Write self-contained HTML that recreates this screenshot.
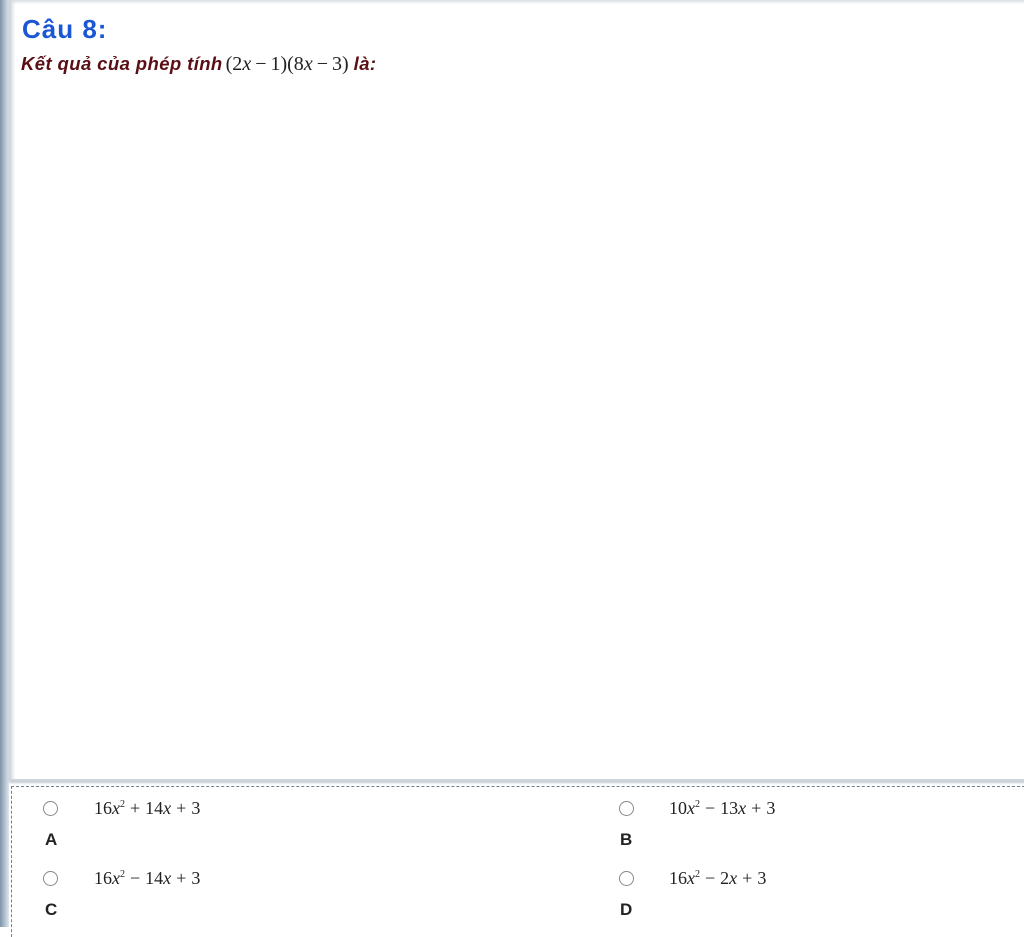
<!DOCTYPE html>
<html><head><meta charset="utf-8"><style>
body{margin:0;width:1024px;height:927px;background:#fff;position:relative;overflow:hidden;font-family:"Liberation Sans",sans-serif}
.strip{position:absolute;left:0;top:0;width:9px;height:927px;background:linear-gradient(90deg,#7f93a8,#b8c6d4 60%,#dfe5ea)}
.panel{position:absolute;left:9px;top:-2px;width:1020px;height:779px;border:2px solid #cfd6dd;box-shadow:inset 2px 2px 3px #d8dde2, 0 2px 2px #c4ccd3;background:#fff}
.h{position:absolute;left:22px;top:14px;color:#1a56d6;font-weight:bold;font-size:26px;letter-spacing:1px}
.q{position:absolute;left:21px;top:53px;color:#5a0f14;font-weight:bold;font-style:italic;font-size:18.5px;letter-spacing:0.4px}
.m{font-family:"Liberation Serif",serif;font-style:normal;font-weight:normal;color:#222;font-size:20px;letter-spacing:0;margin:0 5px 0 3px}
.m i{font-style:italic}
.o{margin:0 4px}
.dash{position:absolute;left:11px;top:786px;width:1013px;height:150px;border-top:1.5px dashed #6f7f8f;border-left:1.5px dashed #6f7f8f}
.r{position:absolute;width:13px;height:13px;border:1.5px solid #888;border-radius:50%;background:#fff}
.e{position:absolute;font-family:"Liberation Serif",serif;font-size:18px;color:#222}
.e sup{font-size:10px;vertical-align:7px}
.e .o{margin:0 5px}
.l{position:absolute;font-weight:bold;font-size:17px;color:#222}
</style></head><body>
<div class="strip"></div>
<div class="panel"></div>
<div class="h">Câu 8:</div>
<div class="q">Kết quả của phép tính<span class="m">(2<i>x</i><span class="o">−</span>1)(8<i>x</i><span class="o">−</span>3)</span>là:</div>
<div class="dash"></div>
<div class="r" style="left:43px;top:801px"></div>
<div class="e" style="left:94px;top:798px">16<i>x</i><sup>2</sup><span class="o">+</span>14<i>x</i><span class="o">+</span>3</div>
<div class="l" style="left:45px;top:830px">A</div>
<div class="r" style="left:619px;top:801px"></div>
<div class="e" style="left:669px;top:798px">10<i>x</i><sup>2</sup><span class="o">−</span>13<i>x</i><span class="o">+</span>3</div>
<div class="l" style="left:620px;top:830px">B</div>
<div class="r" style="left:43px;top:871px"></div>
<div class="e" style="left:94px;top:868px">16<i>x</i><sup>2</sup><span class="o">−</span>14<i>x</i><span class="o">+</span>3</div>
<div class="l" style="left:45px;top:900px">C</div>
<div class="r" style="left:619px;top:871px"></div>
<div class="e" style="left:669px;top:868px">16<i>x</i><sup>2</sup><span class="o">−</span>2<i>x</i><span class="o">+</span>3</div>
<div class="l" style="left:620px;top:900px">D</div>
</body></html>
